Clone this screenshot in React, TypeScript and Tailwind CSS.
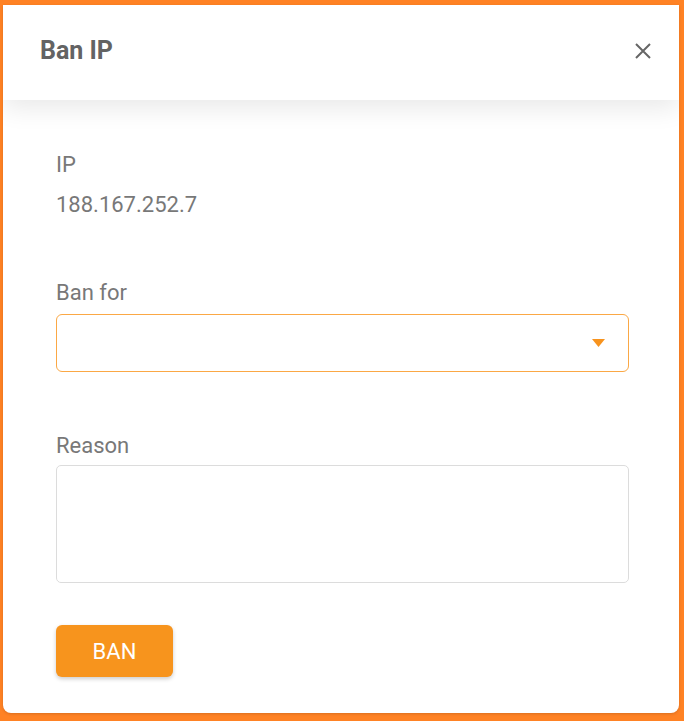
import React from "react";

export default function App() {
  return (
    <div className="w-[684px] h-[721px] bg-[#ff8224] pt-[5px] pl-[3px] pr-[5px] pb-[8px] flex flex-col" style={{ fontFamily: "Roboto, 'Liberation Sans', sans-serif" }}>
      <div className="flex-1 bg-white rounded-b-[8px] shadow-[0_1px_3px_rgba(0,0,0,0.15)] flex flex-col overflow-hidden">
        <div className="relative z-10 h-[95px] shrink-0 bg-white flex items-center justify-between pl-[37px] pr-[27px] pb-[4px] shadow-[0_8px_24px_rgba(0,0,0,0.09)]">
          <h1 className="text-[25px] leading-[28px] font-bold text-[#636363]">Ban IP</h1>
          <button className="w-[18px] h-[18px] flex items-center justify-center text-[#666]">
            <svg width="18" height="18" viewBox="0 0 18 18" fill="none" stroke="currentColor" strokeWidth="2">
              <path d="M2 2L16 16M16 2L2 16" />
            </svg>
          </button>
        </div>
        <div className="flex flex-col pl-[53px] pr-[50px] pt-[52px]">
          <div className="text-[22px] leading-[26px] text-[#787878]">IP</div>
          <div className="mt-[14px] text-[22px] leading-[26px] text-[#787878]">188.167.252.7</div>
          <div className="mt-[62px] text-[22px] leading-[26px] text-[#787878]">Ban for</div>
          <div className="mt-[8px] h-[58px] border-[1.5px] border-[#fba845] rounded-[6px] flex items-center justify-end pr-[23px]">
            <svg width="13" height="8" viewBox="0 0 13 8">
              <path d="M0 0H13L6.5 8Z" fill="#f7931e" />
            </svg>
          </div>
          <div className="mt-[61px] text-[22px] leading-[26px] text-[#787878]">Reason</div>
          <textarea className="mt-[6px] h-[118px] border border-[#dcdcdc] rounded-[5px] resize-none outline-none" />
          <div className="mt-[42px]">
            <button className="w-[117px] h-[52px] bg-[#f7941d] rounded-[6px] text-white text-[22px] font-normal shadow-[0_2px_4px_rgba(0,0,0,0.2)]">BAN</button>
          </div>
        </div>
      </div>
    </div>
  );
}
